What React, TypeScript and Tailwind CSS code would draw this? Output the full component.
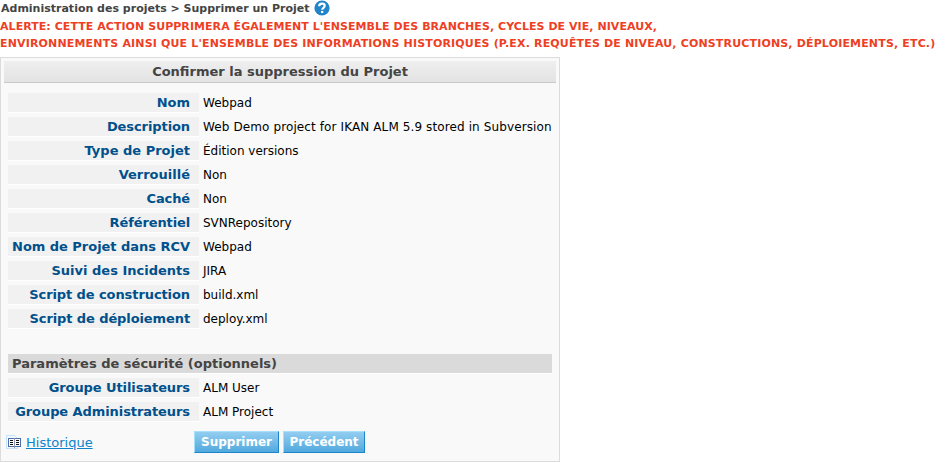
type Detail = { label: string; value: string; labelTracking?: string; valueTracking?: string };

const details: Detail[] = [
  { label: "Nom", value: "Webpad" },
  {
    label: "Description",
    value: "Web Demo project for IKAN ALM 5.9 stored in Subversion",
    labelTracking: "tracking-[-0.09px]",
    valueTracking: "tracking-[0.11px]",
  },
  { label: "Type de Projet", value: "Édition versions" },
  { label: "Verrouillé", value: "Non" },
  { label: "Caché", value: "Non", labelTracking: "tracking-[-0.12px]" },
  { label: "Référentiel", value: "SVNRepository", labelTracking: "tracking-[-0.12px]" },
  { label: "Nom de Projet dans RCV", value: "Webpad", labelTracking: "tracking-[-0.03px]" },
  { label: "Suivi des Incidents", value: "JIRA" },
  { label: "Script de construction", value: "build.xml", labelTracking: "tracking-[-0.09px]" },
  { label: "Script de déploiement", value: "deploy.xml", labelTracking: "tracking-[-0.1px]" },
];

const security: Detail[] = [
  { label: "Groupe Utilisateurs", value: "ALM User", labelTracking: "tracking-[-0.09px]" },
  { label: "Groupe Administrateurs", value: "ALM Project", labelTracking: "tracking-[-0.08px]" },
];

function Row({ label, value, labelTracking = "", valueTracking = "" }: Detail) {
  return (
    <div className="flex h-5 items-stretch">
      <div
        className={`w-[191px] border-b border-white bg-[#f1f1f1] pr-[9px] text-right text-[13px] leading-[19px] font-bold whitespace-nowrap text-[#00508c] ${labelTracking}`}
      >
        {label}
      </div>
      <div className={`pl-1 text-[12px] leading-[21px] whitespace-nowrap text-black ${valueTracking}`}>{value}</div>
    </div>
  );
}

function Button({ children, width }: { children: string; width: string }) {
  return (
    <button
      className={`${width} h-[22px] border border-t-[#a5e1fa] border-r-[#1c86c8] border-b-[#1c86c8] border-l-[#a5e1fa] bg-linear-to-b from-[#93cdf0] to-[#50a9de] text-center text-[12px] leading-[19px] font-bold whitespace-nowrap text-white`}
    >
      {children}
    </button>
  );
}

function HelpIcon() {
  return (
    <svg width="16" height="16" viewBox="0 0 16 16" className="shrink-0">
      <circle cx="8" cy="8" r="7.6" fill="#2183c8" />
      <path d="M5.2 6.3C5.2 4.5 6.4 3.7 8 3.7c1.6 0 2.7.8 2.7 2.1 0 2-2.5 2-2.5 4" fill="none" stroke="#fff" strokeWidth="2.2" />
      <rect x="7" y="10.9" width="2.3" height="2.1" fill="#fff" />
    </svg>
  );
}

function BookIcon() {
  return (
    <svg width="16" height="15" viewBox="0 0 16 15" shapeRendering="crispEdges" className="shrink-0">
      <path d="M.5 .5h8l3 3v10H.5z" fill="#f4fafe" stroke="#c5e2f7" />
      <rect x="2" y="3" width="13" height="9" fill="#4a6fae" />
      <rect x="3" y="4" width="5" height="7" fill="#fff" />
      <rect x="9" y="4" width="5" height="7" fill="#fff" />
      <rect x="8" y="3" width="1" height="10" fill="#8f9bb3" />
      <path d="M4 5.5h3M4 7.5h3M4 9.5h3M10 5.5h3M10 7.5h3M10 9.5h3" stroke="#111" />
    </svg>
  );
}

export default function App() {
  return (
    <div className="h-[463px] w-[948px] overflow-hidden bg-white font-['DejaVu_Sans','Noto_Sans',sans-serif]">
      <div className="flex h-[18px] items-start gap-[4px] pl-px text-[11px] leading-[17px] font-bold text-[#444]">
        <span>Administration des projets &gt; Supprimer un Projet</span>
        <HelpIcon />
      </div>
      <div className="h-[39px] text-[11px] leading-[17px] font-bold whitespace-nowrap text-[#ee3f24]">
        <p className="tracking-[0.055px]">
          ALERTE: CETTE ACTION SUPPRIMERA ÉGALEMENT L'ENSEMBLE DES BRANCHES, CYCLES DE VIE, NIVEAUX,
        </p>
        <p className="tracking-[0.16px]">
          ENVIRONNEMENTS AINSI QUE L'ENSEMBLE DES INFORMATIONS HISTORIQUES (P.EX. REQUÊTES DE NIVEAU, CONSTRUCTIONS, DÉPLOIEMENTS, ETC.)
        </p>
      </div>

      <div className="h-[405px] w-[560px] border border-[#dcdcdc] bg-[#f9f9f9] px-[3px] pt-[3px]">
        <h1 className="h-[22px] border-b border-[#c8c8c8] bg-linear-to-b from-[#efefef] to-[#e3e3e3] text-center text-[13px] leading-[21px] font-bold text-[#444]">
          Confirmer la suppression du Projet
        </h1>

        <div className="flex flex-col gap-1 px-1 pt-[10px]">
          {details.map((d) => (
            <Row key={d.label} {...d} />
          ))}
        </div>

        <div className="flex flex-col gap-1 px-1 pt-[25px]">
          <h2 className="h-5 border-b border-white bg-[#dadada] pl-1 text-[13px] leading-[19px] font-bold text-[#444]">
            Paramètres de sécurité (optionnels)
          </h2>
          {security.map((d) => (
            <Row key={d.label} {...d} />
          ))}
        </div>

        <div className="flex pt-[9px] pl-0.5">
          <div className="flex w-[188px] items-start gap-1 pt-1">
            <BookIcon />
            <a className="text-[13px] leading-[15px] text-[#0d83cc] underline">Historique</a>
          </div>
          <div className="flex gap-1">
            <Button width="w-[85px]">Supprimer</Button>
            <Button width="w-[82px]">Précédent</Button>
          </div>
        </div>
      </div>
    </div>
  );
}
